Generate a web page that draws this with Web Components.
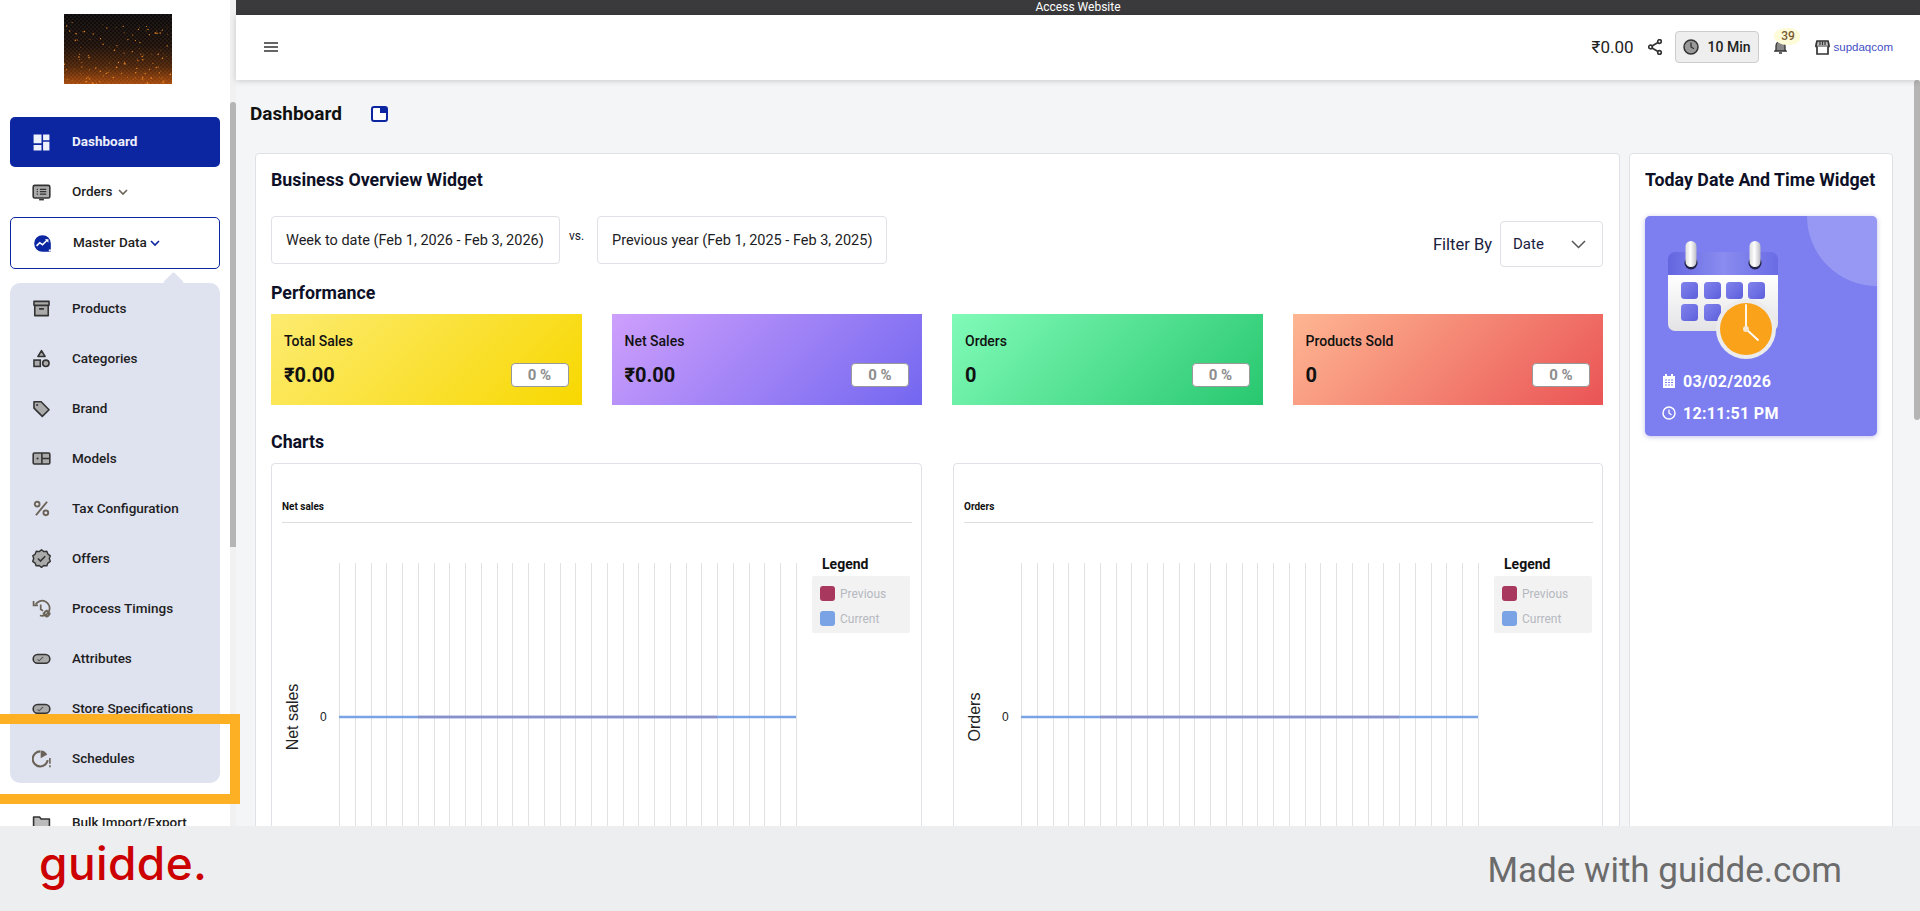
<!DOCTYPE html>
<html lang="en">
<head>
<meta charset="utf-8">
<title>Dashboard</title>
<style>
  html, body { margin: 0; height: 911px; overflow: hidden; background: #f4f5f7; }
  body { font-family: Roboto, "Noto Sans", sans-serif; color: #16182a; }
</style>
</head>
<body>
<app-shell>
  <app-sidebar slot="side">
    <brand-logo></brand-logo>
    <nav-item icon="dashboard" active strong>Dashboard</nav-item>
    <nav-item icon="orders" chevron>Orders</nav-item>
    <nav-item icon="master" chevron outlined>Master Data</nav-item>
    <nav-group>
      <nav-item icon="products">Products</nav-item>
      <nav-item icon="categories">Categories</nav-item>
      <nav-item icon="brand">Brand</nav-item>
      <nav-item icon="models">Models</nav-item>
      <nav-item icon="percent">Tax Configuration</nav-item>
      <nav-item icon="offers">Offers</nav-item>
      <nav-item icon="timings">Process Timings</nav-item>
      <nav-item icon="toggle">Attributes</nav-item>
      <nav-item icon="toggle">Store Specifications</nav-item>
      <nav-item icon="schedules">Schedules</nav-item>
    </nav-group>
    <nav-item icon="folder" spaced>Bulk Import/Export</nav-item>
  </app-sidebar>
  <top-bar slot="top"></top-bar>
  <app-header slot="top"></app-header>
  <dash-page slot="main">
    <overview-widget></overview-widget>
    <clock-widget></clock-widget>
  </dash-page>
</app-shell>
<highlight-box></highlight-box>
<guidde-footer></guidde-footer>

<script>
// icons, material style: grey fill with dark outline
const ICONS = {
  dashboard: `<path fill="currentColor" d="M2 2h10v11H2zM14 2h8v7h-8zM14 11h8v11h-8zM2 15h10v7H2z"/>`,
  orders: `<rect x="1.500" y="3" width="21" height="16" rx="2" fill="#aaa" stroke="#333" stroke-width="2"/><path d="M6 8h1.500M10 8h8M6 11h1.500M10 11h8M6 14h1.500M10 14h8" stroke="#333" stroke-width="1.600"/><path d="M9 20h6v2H9z" fill="#333"/>`,
  master: `<path fill="#0b26a0" d="M12 1.500a10.500 10.500 0 1 0 0 21h10.500V12A10.500 10.500 0 0 0 12 1.500z"/><path d="M4.500 15l4-4 3.500 2.500 6-6" fill="none" stroke="#fff" stroke-width="2"/><path d="M15 6.500h4.500V11z" fill="#fff"/><path d="M20 19.500h2.500V22H20z" fill="#fff"/>`,
  products: `<path d="M2.500 3h19v5h-1v13h-17V8h-1z" fill="#aaa" stroke="#333" stroke-width="2" stroke-linejoin="round"/><path d="M3 8h18M9 12.500h6" stroke="#333" stroke-width="2"/>`,
  categories: `<path d="M12 2l4.500 7.500h-9z" fill="#aaa" stroke="#333" stroke-width="2" stroke-linejoin="round"/><rect x="2.500" y="14" width="8" height="8" fill="#aaa" stroke="#333" stroke-width="2"/><circle cx="17.500" cy="18" r="4" fill="#aaa" stroke="#333" stroke-width="2"/>`,
  brand: `<path d="M2.500 3.500h9l10 10-8.500 8.500-10.500-10.500z" fill="#aaa" stroke="#333" stroke-width="2" stroke-linejoin="round"/><circle cx="6.500" cy="7.500" r="1.300" fill="#333"/>`,
  models: `<rect x="1.500" y="5" width="21" height="14" rx="1.500" fill="#aaa" stroke="#333" stroke-width="2"/><path d="M12.500 5v14M12.500 12h10" stroke="#333" stroke-width="2"/><circle cx="7" cy="12" r="1.400" fill="#333"/>`,
  percent: `<g fill="none" stroke="#6b6358" stroke-width="2.400"><circle cx="6.500" cy="6.500" r="3"/><circle cx="17.500" cy="17.500" r="3"/><path d="M19 3.500L5 20.500"/></g>`,
  offers: `<path d="M12 1.500l3 2.300 3.700-.4 1.400 3.500 3 2.200-1.300 3.500 1.300 3.500-3 2.200-1.400 3.500-3.700-.4-3 2.300-3-2.300-3.700.4-1.400-3.500-3-2.200 1.300-3.500L1 9.100l3-2.200 1.400-3.500 3.700.4z" fill="#aaa" stroke="#333" stroke-width="1.800" stroke-linejoin="round" transform="translate(0 -.5)"/><path d="M7.500 12l3.200 3.200 6-6" fill="none" stroke="#333" stroke-width="2"/>`,
  timings: `<path d="M4.500 7A9.500 9.500 0 1 1 10 20.800" fill="none" stroke="#6b6358" stroke-width="2.200"/><path d="M2 2.500V8h5.500" fill="none" stroke="#6b6358" stroke-width="2.200"/><path d="M11 7v6l3 2" fill="none" stroke="#6b6358" stroke-width="2.200"/><circle cx="18.500" cy="18.500" r="3" fill="none" stroke="#6b6358" stroke-width="2.600"/><path d="M18.500 13.500v2M18.500 21.500v2M13.500 18.500h2M21.500 18.500h2" stroke="#6b6358" stroke-width="2.200"/>`,
  toggle: `<rect x="1.500" y="7" width="21" height="11" rx="5.500" fill="#aaa" stroke="#333" stroke-width="2"/><path d="M7 13l2 2 5-5" fill="none" stroke="#555" stroke-width="1.300"/>`,
  schedules: `<path d="M10.500 3A9.500 9.500 0 1 0 19.800 14" fill="none" stroke="#6b6358" stroke-width="2.600"/><path d="M11 1.800v10l8.300-4.800A9.800 9.800 0 0 0 11 1.800z" fill="#6b6358"/><path d="M22.600 11.500v7M22.600 20.500v2.500" stroke="#6b6358" stroke-width="2"/>`,
  folder: `<path d="M2 5h7.500l2 2.500H22V20H2z" fill="#bbb" stroke="#333" stroke-width="2" stroke-linejoin="round"/>`
};

class AppShell extends HTMLElement {
  constructor() {
    super();
    this.attachShadow({ mode: "open" });
    this.shadowRoot.innerHTML = `
      <style>
        :host { display: grid; grid-template-columns: 230px 6px 1fr; height: 911px; }
        .scroll { background: #f1f1f1; position: relative; }
        .scroll i { display: block; margin-top: 102px; height: 445px; background: #b5b5b5; border-radius: 3px 3px 0 0; }
        .right { display: flex; flex-direction: column; min-width: 0; height: 911px; }
      </style>
      <slot name="side"></slot>
      <div class="scroll"><i></i></div>
      <div class="right"><slot name="top"></slot><slot name="main"></slot></div>
    `;
  }
}

class AppSidebar extends HTMLElement {
  constructor() {
    super();
    this.attachShadow({ mode: "open" });
    this.shadowRoot.innerHTML = `
      <style>
        :host { display: block; height: 911px; background: #fff; overflow: hidden; }
      </style>
      <slot></slot>
    `;
  }
}

class BrandLogo extends HTMLElement {
  constructor() {
    super();
    this.attachShadow({ mode: "open" });
    // sparks, fixed seed so that each run is the same
    let seed = 7, sparks = "";
    const rnd = () => (seed = (seed * 16807) % 2147483647) / 2147483647;
    for (let i = 0; i < 130; i++) {
      const y = 70 - Math.pow(rnd(), 1.6) * 62;
      sparks += `<circle cx="${(rnd() * 108).toFixed(1)}" cy="${y.toFixed(1)}" r="${(0.3 + rnd() * 0.5).toFixed(2)}" fill="#f08a24"/>`;
    }
    this.shadowRoot.innerHTML = `
      <style>
        :host { display: block; height: 70px; padding: 14px 0 33px 64px; }
        svg { display: block; }
      </style>
      <svg width="108" height="70" viewBox="0 0 108 70">
        <defs>
          <linearGradient id="fire" x1="0" y1="0" x2="0" y2="1">
            <stop offset="0" stop-color="#0c0a0a"/><stop offset=".45" stop-color="#1d1009"/>
            <stop offset=".75" stop-color="#4d2408"/><stop offset="1" stop-color="#a5480a"/>
          </linearGradient>
          <pattern id="chk" width="4" height="4" patternUnits="userSpaceOnUse">
            <rect width="2" height="2" fill="#fff" opacity=".05"/><rect x="2" y="2" width="2" height="2" fill="#fff" opacity=".05"/>
          </pattern>
        </defs>
        <rect width="108" height="70" fill="url(#fire)"/>
        <rect width="108" height="70" fill="url(#chk)"/>
        ${sparks}
      </svg>
    `;
  }
}

class NavItem extends HTMLElement {
  constructor() {
    super();
    this.attachShadow({ mode: "open" });
  }
  connectedCallback() {
    const icon = ICONS[this.getAttribute("icon")] || "";
    const chev = this.hasAttribute("chevron")
      ? `<svg class="chev" width="10" height="7" viewBox="0 0 10 7"><path d="M1 1l4 4 4-4" fill="none" stroke="currentColor" stroke-width="1.600"/></svg>` : "";
    this.shadowRoot.innerHTML = `
      <style>
        :host { display: flex; align-items: center; height: 50px; margin: 0 10px; padding-left: 22px; box-sizing: border-box;
          font: 480 13.5px Roboto, sans-serif; color: #1e1e22; }
        :host([active]) { background: #0b26a0; color: #eef0fb; border-radius: 5px; font-weight: 700; }
        :host([outlined]) { height: 52px; border: 1px solid #0b26a0; border-radius: 5px; padding-left: 22px; --chev: #0b26a0; --chev-gap: 3px; }
        :host([spaced]) { margin-top: 14px; }
        :host([active]) .label, :host([chevron]) .label { margin-bottom: 2px; }
        .ico { width: 19px; height: 19px; margin-right: 21px; flex: none; }
        .chev { margin-left: var(--chev-gap, 5px); color: var(--chev, #6b6358); }
      </style>
      <svg class="ico" viewBox="0 0 24 24">${icon}</svg>
      <span class="label"><slot></slot></span>${chev}
    `;
  }
}

class NavGroup extends HTMLElement {
  constructor() {
    super();
    this.attachShadow({ mode: "open" });
    this.shadowRoot.innerHTML = `
      <style>
        :host { display: block; position: relative; margin: 15px 10px 0; height: 500px; background: #dfe2ef; border-radius: 10px; }
        :host::before { content: ""; position: absolute; left: 156px; top: -8px; width: 15px; height: 15px; background: #dfe2ef; transform: rotate(45deg); border-radius: 2px; }
        .rows { margin: -1px -10px 0; position: relative; }
      </style>
      <div class="rows"><slot></slot></div>
    `;
  }
}

class TopBar extends HTMLElement {
  constructor() {
    super();
    this.attachShadow({ mode: "open" });
    this.shadowRoot.innerHTML = `
      <style>
        :host { display: block; height: 15px; background: #3a3a3c; color: #fff; text-align: center; font: 12px/15px Roboto, sans-serif; }
      </style>
      Access Website
    `;
  }
}

class AppHeader extends HTMLElement {
  constructor() {
    super();
    this.attachShadow({ mode: "open" });
    this.shadowRoot.innerHTML = `
      <style>
        :host { display: flex; align-items: center; height: 65px; box-sizing: border-box; background: #fff; padding: 0 27px 1px 28px;
          box-shadow: 0 1px 6px rgba(0,0,0,.18); position: relative; z-index: 2; color: #222; }
        .burger { margin-right: auto; display: block; }
        .money { font-size: 17px; margin-right: 14px; }
        .share { margin-right: 13px; }
        .timer { display: flex; align-items: center; width: 84px; height: 32px; box-sizing: border-box; padding-left: 7px; gap: 9px;
          background: #eee; border: 1px solid #ccc; border-radius: 4px; font: 500 14px Roboto, sans-serif; margin-right: 15px; }
        .bell { position: relative; width: 26px; height: 20px; margin-right: 15px; }
        .bell b { position: absolute; left: 0; top: -9px; width: 26px; height: 17px; border-radius: 50% 45% 40% 55%; background: #fdfbd8; color: #7a5a34;
          font: 500 12px/17px Roboto, sans-serif; text-align: center; padding-left: 3px; box-sizing: border-box; }
        .bell svg { position: absolute; left: 0; top: 3px; }
        .store { margin-right: 4px; }
        .shop { font: 11.5px "Liberation Sans", sans-serif; color: #3f4fc4; }
      </style>
      <svg class="burger" width="14" height="10" viewBox="0 0 14 10"><path d="M0 1h14M0 5h14M0 9h14" stroke="#333" stroke-width="1.300"/></svg>
      <span class="money">₹0.00</span>
      <svg class="share" width="14" height="16" viewBox="0 0 14 16"><g fill="none" stroke="#333" stroke-width="1.700"><circle cx="11.500" cy="2.500" r="1.800"/><circle cx="2.500" cy="8" r="1.800"/><circle cx="11.500" cy="13.500" r="1.800"/><path d="M4 7l6-3.500M4 9l6 3.500"/></g></svg>
      <div class="timer">
        <svg width="16" height="16" viewBox="0 0 16 16"><circle cx="8" cy="8" r="7" fill="#999" stroke="#333" stroke-width="1.500"/><path d="M8 3.500V8l3 1.800" fill="none" stroke="#333" stroke-width="1.300"/></svg>
        10 Min
      </div>
      <div class="bell">
        <svg width="13" height="14" viewBox="0 0 13 14"><path d="M2 10V6a4.500 4.500 0 0 1 9 0v4l1 1H1z" fill="#888" stroke="#333" stroke-width="1.300"/><path d="M5 13h3" stroke="#333" stroke-width="1.500"/></svg>
        <b>39</b>
      </div>
      <svg class="store" width="15" height="15" viewBox="0 0 15 15"><path d="M1 5l1-4h11l1 4v1.500H1z" fill="#bbb" stroke="#333" stroke-width="1.700"/><path d="M2 6.500V14h11V6.500" fill="#fff" stroke="#333" stroke-width="1.700"/><path d="M5 1.500V5M7.500 1.500V5M10 1.500V5" stroke="#333" stroke-width="1.200"/></svg>
      <span class="shop">supdaqcom</span>
    `;
  }
}

class DashPage extends HTMLElement {
  constructor() {
    super();
    this.attachShadow({ mode: "open" });
    this.shadowRoot.innerHTML = `
      <style>
        :host { display: block; flex: 1; position: relative; overflow: hidden; min-height: 0; }
        .thumb { position: absolute; right: 0; top: 0; width: 6px; height: 340px; background: #b5b5b5; border-radius: 3px; }
        .title { display: flex; align-items: center; height: 26px; margin: 20px 0 27px 14px; font: 700 19px Roboto, sans-serif; color: #111; }
        .title svg { margin-left: 29px; margin-top: 1px; }
        .cols { display: grid; grid-template-columns: 1365px 264px; gap: 9px; margin-left: 19px; }
      </style>
      <div class="thumb"></div>
      <div class="title">Dashboard
        <svg width="17" height="16" viewBox="0 0 17 16"><rect x="1" y="1" width="15" height="14" rx="2" fill="#fff" stroke="#0b26a0" stroke-width="2"/><path d="M9 1h7v6H9z" fill="#0b26a0"/></svg>
      </div>
      <div class="cols"><slot></slot></div>
    `;
  }
}

class OverviewWidget extends HTMLElement {
  constructor() {
    super();
    this.attachShadow({ mode: "open" });
    this.shadowRoot.innerHTML = `
      <style>
        :host { display: block; height: 760px; box-sizing: border-box; background: #fff; border: 1px solid #dfe1e6; border-radius: 4px; padding: 15px 16px 0 15px; }
        h2, h3 { margin: 0; font: 700 17.8px/22px Roboto, sans-serif; color: #0d1026; }
        .range { display: flex; align-items: flex-start; margin-top: 25px; height: 48px; }
        .box { height: 48px; box-sizing: border-box; border: 1px solid #dfe1e6; border-radius: 4px; display: flex; align-items: center; font-size: 14.5px; padding-left: 14px; color: #1c1c24; white-space: nowrap; }
        .vs { font-size: 12px; margin: 13px 11px 0 9px; width: 17px; }
        .filter { margin-left: auto; margin-top: 5px; display: flex; align-items: center; font-size: 16.5px; color: #1a2040; }
        .select { margin-left: 8px; width: 103px; height: 46px; box-sizing: border-box; border: 1px solid #dfe1e6; border-radius: 4px; display: flex; align-items: center; justify-content: space-between; padding: 0 16px 0 12px; font-size: 15px; }
        .stats { display: grid; grid-template-columns: repeat(4, 1fr); gap: 30px; margin-top: 10px; }
        .charts { display: grid; grid-template-columns: 651px 650px; gap: 31px; margin-top: 10px; }
        .perf { margin-top: 18px; }
        .ch { margin-top: 26px; }
      </style>
      <h2>Business Overview Widget</h2>
      <div class="range">
        <div class="box" style="width:289px">Week to date (Feb 1, 2026 - Feb 3, 2026)</div>
        <div class="vs">vs.</div>
        <div class="box" style="width:290px">Previous year (Feb 1, 2025 - Feb 3, 2025)</div>
        <div class="filter">Filter By
          <div class="select">Date <svg width="15" height="9" viewBox="0 0 15 9"><path d="M1 1l6.500 6.500L14 1" fill="none" stroke="#555" stroke-width="1.500"/></svg></div>
        </div>
      </div>
      <h3 class="perf">Performance</h3>
      <div class="stats">
        <stat-card label="Total Sales" value="₹0.00" from="#fdeb71" to="#f8d800"></stat-card>
        <stat-card label="Net Sales" value="₹0.00" from="#ce9ffc" to="#7367f0"></stat-card>
        <stat-card label="Orders" value="0" from="#81fbb8" to="#28c76f"></stat-card>
        <stat-card label="Products Sold" value="0" from="#feb692" to="#ea5455"></stat-card>
      </div>
      <h3 class="ch">Charts</h3>
      <div class="charts">
        <chart-card title-text="Net sales" axis="Net sales"></chart-card>
        <chart-card title-text="Orders" axis="Orders"></chart-card>
      </div>
    `;
  }
}

class StatCard extends HTMLElement {
  constructor() {
    super();
    this.attachShadow({ mode: "open" });
  }
  connectedCallback() {
    const g = `linear-gradient(135deg, ${this.getAttribute("from")}, ${this.getAttribute("to")})`;
    this.shadowRoot.innerHTML = `
      <style>
        :host { display: block; height: 91px; box-sizing: border-box; padding: 17px 13px 0 13px; color: #111; }
        .t { font: 500 14px/20px Roboto, sans-serif; }
        .row { display: flex; justify-content: space-between; align-items: center; margin-top: 12px; height: 24px; }
        .v { font: 700 20px Roboto, sans-serif; }
        .p { width: 58px; height: 24px; box-sizing: border-box; background: #fff; border: 1px solid #999; border-radius: 4px; text-align: center; font: 700 15px/22px Roboto, sans-serif; color: #8d8d8d; }
      </style>
      <div class="t">${this.getAttribute("label")}</div>
      <div class="row"><span class="v">${this.getAttribute("value")}</span><span class="p">0 %</span></div>
    `;
    this.style.background = g;
  }
}

class ChartCard extends HTMLElement {
  constructor() {
    super();
    this.attachShadow({ mode: "open" });
  }
  connectedCallback() {
    let grid = "";
    for (let i = 0; i < 30; i++) {
      const x = Math.round(57 + i * 15.75) + 0.5;
      grid += `<line x1="${x}" y1="40" x2="${x}" y2="320" stroke="#e2e2e2"/>`;
    }
    this.shadowRoot.innerHTML = `
      <style>
        :host { display: block; height: 400px; box-sizing: border-box; border: 1px solid #dfe1e6; border-radius: 4px; padding: 0 9px 0 10px; overflow: hidden; }
        .head { height: 59px; box-sizing: border-box; border-bottom: 1px solid #ddd; padding-top: 36px; font: 700 10px/14px Roboto, sans-serif; color: #111; }
        .body { display: flex; }
        svg { display: block; flex: none; }
        svg text { font-family: "Liberation Sans", sans-serif; fill: #222; }
        .legend { width: 98px; padding-top: 32px; }
        .legend b { display: block; font: 700 14px/18px Roboto, sans-serif; color: #111; padding-left: 10px; }
        .list { margin-top: 3px; height: 57px; box-sizing: border-box; padding-top: 5px; background: #f2f2f2; border-radius: 2px; }
        .item { display: flex; align-items: center; height: 25px; padding-left: 8px; gap: 5px; font-size: 12px; color: #b5b8c0; }
        .item i { width: 15px; height: 15px; border-radius: 3px; }
      </style>
      <div class="head">${this.getAttribute("title-text")}</div>
      <div class="body">
        <svg width="530" height="320" viewBox="0 0 530 320">
          ${grid}
          <line x1="57" y1="194" x2="514" y2="194" stroke="#7aa3e5" stroke-width="2.500"/>
          <line x1="136" y1="194" x2="435" y2="194" stroke="#8b90c9" stroke-width="2.500"/>
          <text x="38" y="198" font-size="12">0</text>
          <text transform="translate(16 194) rotate(-90)" text-anchor="middle" font-size="16">${this.getAttribute("axis")}</text>
        </svg>
        <div class="legend">
          <b>Legend</b>
          <div class="list">
            <div class="item"><i style="background:#a8385d"></i>Previous</div>
            <div class="item"><i style="background:#7aa3e5"></i>Current</div>
          </div>
        </div>
      </div>
    `;
  }
}

class ClockWidget extends HTMLElement {
  constructor() {
    super();
    this.attachShadow({ mode: "open" });
    const cells = [[13, 53], [36, 53], [58, 53], [80, 53], [13, 75], [36, 75]]
      .map(([x, y]) => `<rect x="${x}" y="${y - 12}" width="17" height="17" rx="3.500" fill="url(#cell)"/>`).join("");
    this.shadowRoot.innerHTML = `
      <style>
        :host { display: block; height: 760px; box-sizing: border-box; background: #fff; border: 1px solid #dfe1e6; border-radius: 4px; padding: 15px 15px 0; }
        h2 { margin: 0; font: 700 17.8px/22px Roboto, sans-serif; color: #0d1026; white-space: nowrap; }
        .card { position: relative; overflow: hidden; margin-top: 25px; height: 220px; box-sizing: border-box; padding: 25px 0 0 23px; background: #7d7ff0; border-radius: 5px;
          box-shadow: 0 1px 5px rgba(100,100,200,.4); color: #fff; }
        .card::before { content: ""; position: absolute; right: -70px; top: -70px; width: 140px; height: 140px; border-radius: 50%; background: rgba(255,255,255,.2); }
        svg.art { display: block; position: relative; }
        .row { display: flex; align-items: center; gap: 7px; height: 32px; margin-left: -6px; font: 700 16px Roboto, sans-serif; letter-spacing: .3px; }
        .rows { margin-top: 4px; }
      </style>
      <h2>Today Date And Time Widget</h2>
      <div class="card">
        <svg class="art" width="115" height="120" viewBox="0 0 115 120">
          <defs>
            <linearGradient id="cell" x1="0" y1="0" x2="1" y2="1"><stop offset="0" stop-color="#8183ec"/><stop offset="1" stop-color="#5d5fdc"/></linearGradient>
            <linearGradient id="head" x1="0" y1="0" x2="1" y2="0"><stop offset="0" stop-color="#6466e0"/><stop offset=".5" stop-color="#8a8cf0"/><stop offset="1" stop-color="#6a6ce4"/></linearGradient>
            <linearGradient id="page" x1="0" y1="0" x2="0" y2="1"><stop offset="0" stop-color="#fff"/><stop offset="1" stop-color="#e3e3e6"/></linearGradient>
            <linearGradient id="ring" x1="0" y1="0" x2="1" y2="0"><stop offset="0" stop-color="#dcdcdc"/><stop offset=".45" stop-color="#fff"/><stop offset="1" stop-color="#bcbcc4"/></linearGradient>
          </defs>
          <path d="M0 34h110v49a7 7 0 0 1-7 7H7a7 7 0 0 1-7-7z" fill="url(#page)"/>
          <path d="M0 34V18a7 7 0 0 1 7-7h96a7 7 0 0 1 7 7v16z" fill="url(#head)"/>
          ${cells}
          <circle cx="23" cy="22" r="6.500" fill="#23234a"/><circle cx="87" cy="22" r="6.500" fill="#23234a"/>
          <rect x="17.500" y="0" width="11" height="26" rx="5.500" fill="url(#ring)"/><rect x="81.500" y="0" width="11" height="26" rx="5.500" fill="url(#ring)"/>
          <circle cx="78" cy="88" r="30" fill="#ececec"/>
          <circle cx="78" cy="88" r="26" fill="#fba21b"/>
          <path d="M78 64v24l12 11" fill="none" stroke="#fff" stroke-width="1.800" stroke-linecap="round"/>
          <circle cx="78" cy="88" r="3" fill="#f5e6d0"/>
        </svg>
        <div class="rows">
          <div class="row"><svg width="14" height="16" viewBox="0 0 14 16"><path d="M1 3h2V1h2v2h4V1h2v2h2v12H1z" fill="#fff"/><path d="M3 7h8M3 9.500h8M3 12h8" stroke="#7d7ff0" stroke-width="1" stroke-dasharray="2 1"/></svg>03/02/2026</div>
          <div class="row"><svg width="14" height="14" viewBox="0 0 14 14"><circle cx="7" cy="7" r="6" fill="none" stroke="#fff" stroke-width="1.500"/><path d="M7 3.500V7l2.500 2" fill="none" stroke="#fff" stroke-width="1.300"/></svg>12:11:51 PM</div>
        </div>
      </div>
    `;
  }
}

// step marker of the recording, lies over the sidebar
class HighlightBox extends HTMLElement {
  constructor() {
    super();
    this.attachShadow({ mode: "open" });
    this.shadowRoot.innerHTML = `
      <style>
        :host { position: absolute; left: -10px; top: 714px; width: 250px; height: 90px; box-sizing: border-box; border: 10px solid #fdb023; z-index: 5; }
      </style>
    `;
  }
}

class GuiddeFooter extends HTMLElement {
  constructor() {
    super();
    this.attachShadow({ mode: "open" });
    this.shadowRoot.innerHTML = `
      <style>
        :host { position: absolute; left: 0; right: 0; bottom: 0; height: 85px; background: #edeef0; z-index: 6; display: flex; align-items: center; justify-content: space-between; padding: 0 78px 0 39px; }
        .logo { font: 500 46px/1 Inter, sans-serif; color: #cc0000; letter-spacing: .4px; margin-top: -12px; }
        .made { font: 400 35px/1 Roboto, sans-serif; color: #6b6b6b; margin-top: 3px; }
      </style>
      <span class="logo">guidde.</span>
      <span class="made">Made with guidde.com</span>
    `;
  }
}

customElements.define("app-shell", AppShell);
customElements.define("app-sidebar", AppSidebar);
customElements.define("brand-logo", BrandLogo);
customElements.define("nav-item", NavItem);
customElements.define("nav-group", NavGroup);
customElements.define("top-bar", TopBar);
customElements.define("app-header", AppHeader);
customElements.define("dash-page", DashPage);
customElements.define("overview-widget", OverviewWidget);
customElements.define("stat-card", StatCard);
customElements.define("chart-card", ChartCard);
customElements.define("clock-widget", ClockWidget);
customElements.define("highlight-box", HighlightBox);
customElements.define("guidde-footer", GuiddeFooter);
</script>
</body>
</html>
